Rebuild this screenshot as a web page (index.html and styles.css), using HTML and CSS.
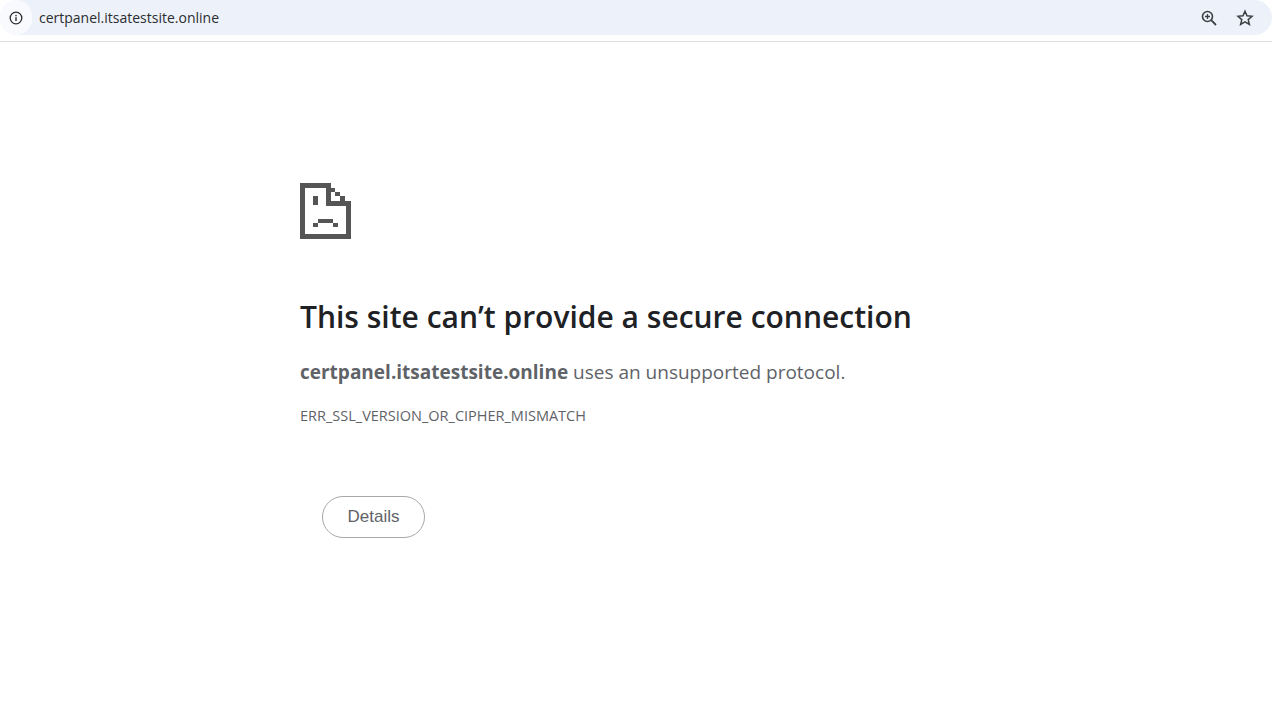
FILE: index.html
```html
<!DOCTYPE html>
<html lang="en">
<head>
<meta charset="utf-8">
<title>certpanel.itsatestsite.online</title>
<link rel="stylesheet" href="styles.css">
</head>
<body>
<header class="toolbar">
  <div class="omnibox">
    <span class="chip">
      <svg class="info" width="16" height="16" viewBox="0 0 16 16"><circle cx="8" cy="8" r="5.8" fill="none" stroke="#2b2d30" stroke-width="1.3"/><rect x="7.3" y="7.2" width="1.4" height="3.8" fill="#2b2d30"/><rect x="7.3" y="4.9" width="1.4" height="1.4" fill="#2b2d30"/></svg>
    </span>
    <span class="url">certpanel.itsatestsite.online</span>
    <span class="actions">
      <svg width="18" height="18" viewBox="0 0 18 18"><circle cx="7.5" cy="7.5" r="5" fill="none" stroke="#3c4043" stroke-width="1.6"/><path d="M11.2 11.2L16 16" stroke="#3c4043" stroke-width="1.8" fill="none"/><path d="M5 7.5h5M7.5 5v5" stroke="#3c4043" stroke-width="1.3" fill="none"/></svg>
      <svg width="18" height="18" viewBox="0 0 18 18"><path d="M9 2.2l2 4.6 5 .5-3.8 3.3 1.2 4.9L9 12.9l-4.400 2.600 1.200-4.900L2 7.300l5-.5z" fill="none" stroke="#3c4043" stroke-width="1.500" stroke-linejoin="miter"/></svg>
    </span>
  </div>
</header>
<main class="content">
  <svg class="sad-page" width="51" height="56" viewBox="0 0 51 56" fill="#555" shape-rendering="crispEdges">
    <rect x="0" y="0" width="5" height="56"/>
    <rect x="0" y="0" width="31" height="5"/>
    <rect x="0" y="51" width="51" height="5"/>
    <rect x="46" y="18" width="5" height="38"/>
    <rect x="26" y="0" width="5" height="23"/>
    <rect x="26" y="18" width="25" height="5"/>
    <rect x="31" y="5" width="4" height="4"/>
    <rect x="35" y="9" width="5" height="4"/>
    <rect x="40" y="13" width="5" height="5"/>
    <rect x="13" y="13" width="5" height="9"/>
    <rect x="18" y="36" width="15" height="4"/>
    <rect x="13" y="40" width="5" height="4"/>
    <rect x="33" y="40" width="5" height="4"/>
  </svg>
  <h1 class="title">This site can’t provide a secure connection</h1>
  <p class="summary"><strong class="host">certpanel.itsatestsite.online</strong> uses an unsupported protocol.</p>
  <p class="code">ERR_SSL_VERSION_OR_CIPHER_MISMATCH</p>
  <button class="details" type="button">Details</button>
</main>
</body>
</html>
```
FILE: styles.css
```css
* { box-sizing: border-box; }
html, body { margin: 0; padding: 0; background: #fff; }
body { font-family: "Open Sans", "Noto Sans", sans-serif; overflow: hidden; height: 719px; }
.toolbar { height: 42px; padding-bottom: 6px; border-bottom: 1px solid #dadce0; }
.omnibox { height: 35px; display: flex; align-items: center; background: #edf2fa; border-radius: 18px; }
.chip { width: 32px; height: 35px; margin-right: 7px; display: flex; align-items: center; justify-content: center; background: #f8fafd; border-radius: 18px; }
.url { font-size: 14px; color: #2b2d30; flex: 1; }
.actions { display: flex; gap: 18px; align-items: center; padding-right: 18px; }
.content { padding: 141px 0 0 300px; }
.sad-page { display: block; }
.title { margin: 58px 0 0; font-size: 30px; line-height: 40px; font-weight: 600; color: #202124; }
.summary { margin: 22px 0 0; font-size: 19px; line-height: 26px; color: #5f6368; }
.host { font-weight: 700; }
.code { margin: 21px 0 0; font-size: 14.5px; line-height: 20px; color: #5f6368; }
.details { display: block; margin: 70px 0 0 22px; width: 103px; height: 42px; background: #fff; border: 1px solid #a8a8a8; border-radius: 21px; font-family: "Liberation Sans", Arial, sans-serif; font-size: 17px; color: #5f6368; padding: 0; }
```
